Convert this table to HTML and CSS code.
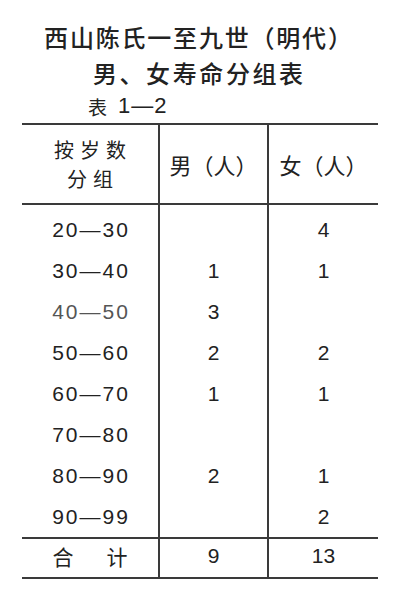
FILE: index.html
```html
<!DOCTYPE html>
<html lang="zh">
<head>
<meta charset="utf-8">
<link rel="stylesheet" href="styles.css">
</head>
<body>
<div class="page">
  <div class="title">
    <div class="t1">西山陈氏一至九世（明代）</div>
    <div class="t2">男、女寿命分组表</div>
  </div>
  <div class="label"><span class="lk">表</span><span class="ln">1—2</span></div>
  <table class="tbl">
    <colgroup>
      <col class="c1"><col class="c2"><col class="c3">
    </colgroup>
    <thead>
      <tr>
        <th class="h1"><span class="hl">按岁数</span><span class="hl">分组</span></th>
        <th class="h2">男（人）</th>
        <th class="h3">女（人）</th>
      </tr>
    </thead>
    <tbody>
      <tr class="first"><td>20—30</td><td></td><td>4</td></tr>
      <tr><td>30—40</td><td>1</td><td>1</td></tr>
      <tr class="faint"><td>40—50</td><td>3</td><td></td></tr>
      <tr><td>50—60</td><td>2</td><td>2</td></tr>
      <tr><td>60—70</td><td>1</td><td>1</td></tr>
      <tr><td>70—80</td><td></td><td></td></tr>
      <tr><td>80—90</td><td>2</td><td>1</td></tr>
      <tr><td>90—99</td><td></td><td>2</td></tr>
    </tbody>
    <tfoot>
      <tr><td class="tot"><span class="he">合</span>计</td><td>9</td><td>13</td></tr>
    </tfoot>
  </table>
</div>
</body>
</html>
```

FILE: styles.css
```css
html, body {
  margin: 0;
  padding: 0;
  background: #ffffff;
}
.page {
  width: 413px;
  height: 596px;
  padding-top: 19px;
  box-sizing: border-box;
  color: #222222;
  font-family: "Noto Sans CJK SC", "Liberation Sans", sans-serif;
}
.title {
  width: 396px;
  text-align: center;
}
.t1, .t2 {
  font-size: 24px;
  line-height: 36px;
  font-weight: 500;
  letter-spacing: 1.8px;
  padding-left: 1.8px;
}
.t2 {
  letter-spacing: 2.6px;
  padding-left: 2.6px;
}
.label {
  padding-left: 88px;
  height: 30px;
  display: flex;
  align-items: center;
  gap: 11px;
}
.lk {
  font-size: 19px;
}
.ln {
  font-family: "Liberation Sans", sans-serif;
  font-size: 22px;
  letter-spacing: 1px;
}
.tbl {
  margin-left: 22px;
  margin-top: 2px;
  width: 356px;
  border-collapse: collapse;
  table-layout: fixed;
  font-family: "Liberation Sans", sans-serif;
  font-size: 21px;
}
.c1 { width: 137px; }
.c2 { width: 109px; }
.c3 { width: 110px; }
.tbl th, .tbl td {
  padding: 0;
  text-align: center;
  vertical-align: middle;
}
.tbl thead tr {
  height: 80px;
  border-top: 2px solid #3a3a3a;
  border-bottom: 2px solid #3a3a3a;
}
.tbl th {
  font-family: "Noto Sans CJK SC", sans-serif;
  font-weight: 400;
  font-size: 22px;
}
.tbl th:nth-child(2), .tbl td:nth-child(2) {
  border-left: 2px solid #3a3a3a;
  border-right: 2px solid #3a3a3a;
}
.h1 {
  padding-top: 4px;
}
.hl {
  display: block;
  font-size: 20px;
  line-height: 29px;
  letter-spacing: 6px;
  padding-left: 6px;
}
.h2, .h3 {
  padding-bottom: 4px;
}
.tbl tbody tr {
  height: 41px;
}
.tbl tbody td {
  line-height: 41px;
}
.tbl tbody td:first-child {
  letter-spacing: 2px;
  padding-left: 2px;
}
.tbl tbody tr.first {
  height: 45px;
}
.tbl tbody tr.first td {
  padding-top: 4px;
}
.faint td:first-child {
  color: #555555;
}
.tbl tfoot tr {
  height: 40px;
  border-top: 2px solid #3a3a3a;
  border-bottom: 2px solid #3a3a3a;
}
.tbl tfoot td {
  padding-bottom: 5px;
}
.tot {
  font-family: "Noto Sans CJK SC", sans-serif;
  font-size: 21px;
}
.he {
  margin-right: 33px;
}
```
